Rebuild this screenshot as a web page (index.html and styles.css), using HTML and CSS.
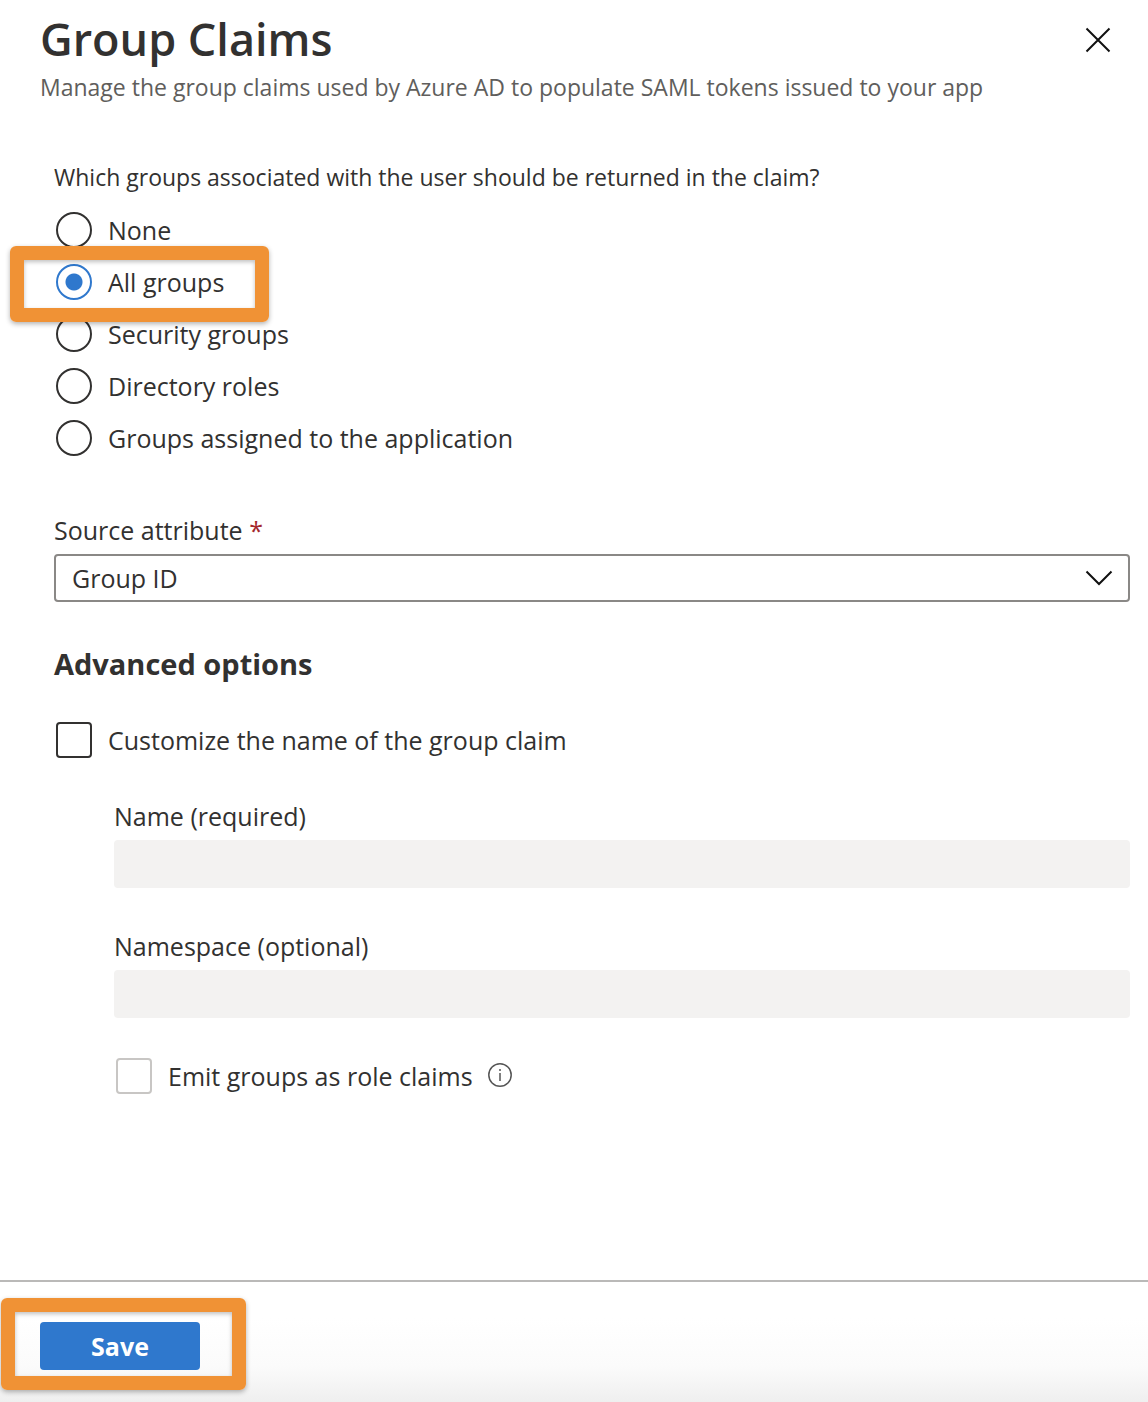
FILE: index.html
```html
<!DOCTYPE html>
<html lang="en">
  <head>
    <meta charset="UTF-8" />
    <meta name="viewport" content="width=device-width, initial-scale=1" />
    <title>Group Claims</title>
    <link rel="stylesheet" href="styles.css">
  </head>
  <body>
    <form class="panel">
      <header class="panel-header">
        <div class="panel-heading">
          <h1>Group Claims</h1>
          <p class="subtitle">Manage the group claims used by Azure AD to populate SAML tokens issued to your app</p>
        </div>
        <button type="button" class="close-btn" aria-label="Close">
          <svg width="26" height="26" viewBox="0 0 26 26" fill="none" stroke="#111" stroke-width="2">
            <path d="M1.5 1.5l23 23M24.5 1.5l-23 23" />
          </svg>
        </button>
      </header>

      <main class="panel-body">
        <fieldset class="groups">
          <legend>Which groups associated with the user should be returned in the claim?</legend>
          <div class="options">
            <label class="option"><input type="radio" name="groups" value="none" /> None</label>
            <label class="option highlight"><input type="radio" name="groups" value="all" checked /> All groups</label>
            <label class="option"><input type="radio" name="groups" value="security" /> Security groups</label>
            <label class="option"><input type="radio" name="groups" value="roles" /> Directory roles</label>
            <label class="option"><input type="radio" name="groups" value="assigned" /> Groups assigned to the application</label>
          </div>
        </fieldset>

        <div class="field source">
          <label for="source">Source attribute <span class="required">*</span></label>
          <div class="select-wrap">
            <select id="source">
              <option>Group ID</option>
            </select>
            <svg class="chevron" width="28" height="16" viewBox="0 0 28 16" fill="none" stroke="#111" stroke-width="2">
              <path d="M1.5 1.5L14 14L26.5 1.5" />
            </svg>
          </div>
        </div>

        <h2>Advanced options</h2>
        <label class="option"><input type="checkbox" name="customize" /> Customize the name of the group claim</label>

        <div class="advanced">
          <div class="field">
            <label for="claim_name">Name (required)</label>
            <input type="text" id="claim_name" disabled />
          </div>
          <div class="field">
            <label for="claim_namespace">Namespace (optional)</label>
            <input type="text" id="claim_namespace" disabled />
          </div>
          <div class="emit">
            <label class="option"><input type="checkbox" name="emit" disabled /> Emit groups as role claims</label>
            <svg class="info" width="26" height="26" viewBox="0 0 26 26" fill="none" stroke="#555" stroke-width="1.5">
              <circle cx="13" cy="12" r="11.2" />
              <path d="M13 10v8M13 6v2" />
            </svg>
          </div>
        </div>
      </main>

      <footer class="panel-footer">
        <div class="save highlight">
          <button type="submit" class="save-btn">Save</button>
        </div>
      </footer>
    </form>
  </body>
</html>
```
FILE: styles.css
```css
* {
  box-sizing: border-box;
}
body {
  margin: 0;
  background: #fff;
  color: #323130;
  font-family: "Segoe UI", "Open Sans", sans-serif;
  font-size: 25px;
  line-height: 36px;
}
input,
select,
button {
  margin: 0;
  font: inherit;
  color: inherit;
}
.panel {
  display: flex;
  flex-direction: column;
  min-height: 100vh;
}
.panel-header {
  display: flex;
  justify-content: space-between;
  align-items: flex-start;
  padding: 9px 37px 0 40px;
}
h1 {
  margin: 0;
  font-size: 45px;
  font-weight: 600;
  line-height: 60px;
}
.subtitle {
  margin: 0;
  font-size: 23px;
  color: #605e5c;
}
.close-btn {
  display: flex;
  margin-top: 18px;
  padding: 0;
  border: none;
  background: none;
  cursor: pointer;
}
.panel-body {
  padding: 54px 18px 40px 54px;
}
.groups {
  margin: 0 0 56px;
  padding: 0;
  border: none;
}
legend {
  padding: 0;
  margin-bottom: 17px;
  font-size: 23px;
}
.options {
  display: flex;
  flex-direction: column;
  align-items: flex-start;
  gap: 16px;
}
.option {
  display: inline-flex;
  align-items: center;
  gap: 16px;
  padding-left: 2px;
}
input[type="radio"],
input[type="checkbox"] {
  appearance: none;
  width: 36px;
  height: 36px;
  border: 2px solid #323130;
  border-radius: 4px;
  background: #fff;
}
input[type="radio"] {
  border-radius: 50%;
}
input[type="radio"]:checked {
  border-color: #2f78cd;
  background: radial-gradient(circle, #2f78cd 8px, #fff 9px);
}
input[type="checkbox"]:disabled {
  border-color: #c8c6c4;
}
.highlight {
  position: relative;
}
/* orange frame drawn over the neighbouring rows */
.highlight::after {
  content: "";
  position: absolute;
  inset: -18px -45px -22px -44px;
  border: 14px solid #f09235;
  border-radius: 6px;
  box-shadow: 0 2px 5px rgba(0, 0, 0, 0.3), inset 0 2px 4px rgba(0, 0, 0, 0.25);
  pointer-events: none;
}
.field {
  display: flex;
  flex-direction: column;
  gap: 6px;
}
.source {
  margin-bottom: 40px;
}
.required {
  color: #a4262c;
}
.select-wrap {
  position: relative;
}
select {
  display: block;
  appearance: none;
  width: 100%;
  height: 48px;
  padding: 0 60px 0 16px;
  border: 2px solid #8a8886;
  border-radius: 4px;
  background: #fff;
}
.chevron {
  position: absolute;
  top: 16px;
  right: 17px;
  pointer-events: none;
}
h2 {
  margin: 0 0 36px;
  font-size: 29px;
  font-weight: 700;
  line-height: 44px;
}
.advanced {
  display: flex;
  flex-direction: column;
  gap: 40px;
  margin-top: 32px;
  padding-left: 60px;
}
input[type="text"] {
  width: 100%;
  height: 48px;
  padding: 0 16px;
  border: none;
  border-radius: 4px;
  background: #f3f2f1;
}
.emit {
  display: flex;
  align-items: center;
  gap: 14px;
}
.panel-footer {
  margin-top: auto;
  padding: 40px 40px 32px;
  border-top: 2px solid #bab9b8;
  background: linear-gradient(#fff 30%, #fbfbfb 70%, #efefef);
}
.save {
  width: 160px;
}
.save.highlight::after {
  inset: -24px -46px -20px -39px;
}
.save-btn {
  display: block;
  width: 100%;
  height: 48px;
  padding: 0;
  border: none;
  border-radius: 4px;
  background: #2f78cd;
  color: #fff;
  font-weight: 700;
  cursor: pointer;
}
```
